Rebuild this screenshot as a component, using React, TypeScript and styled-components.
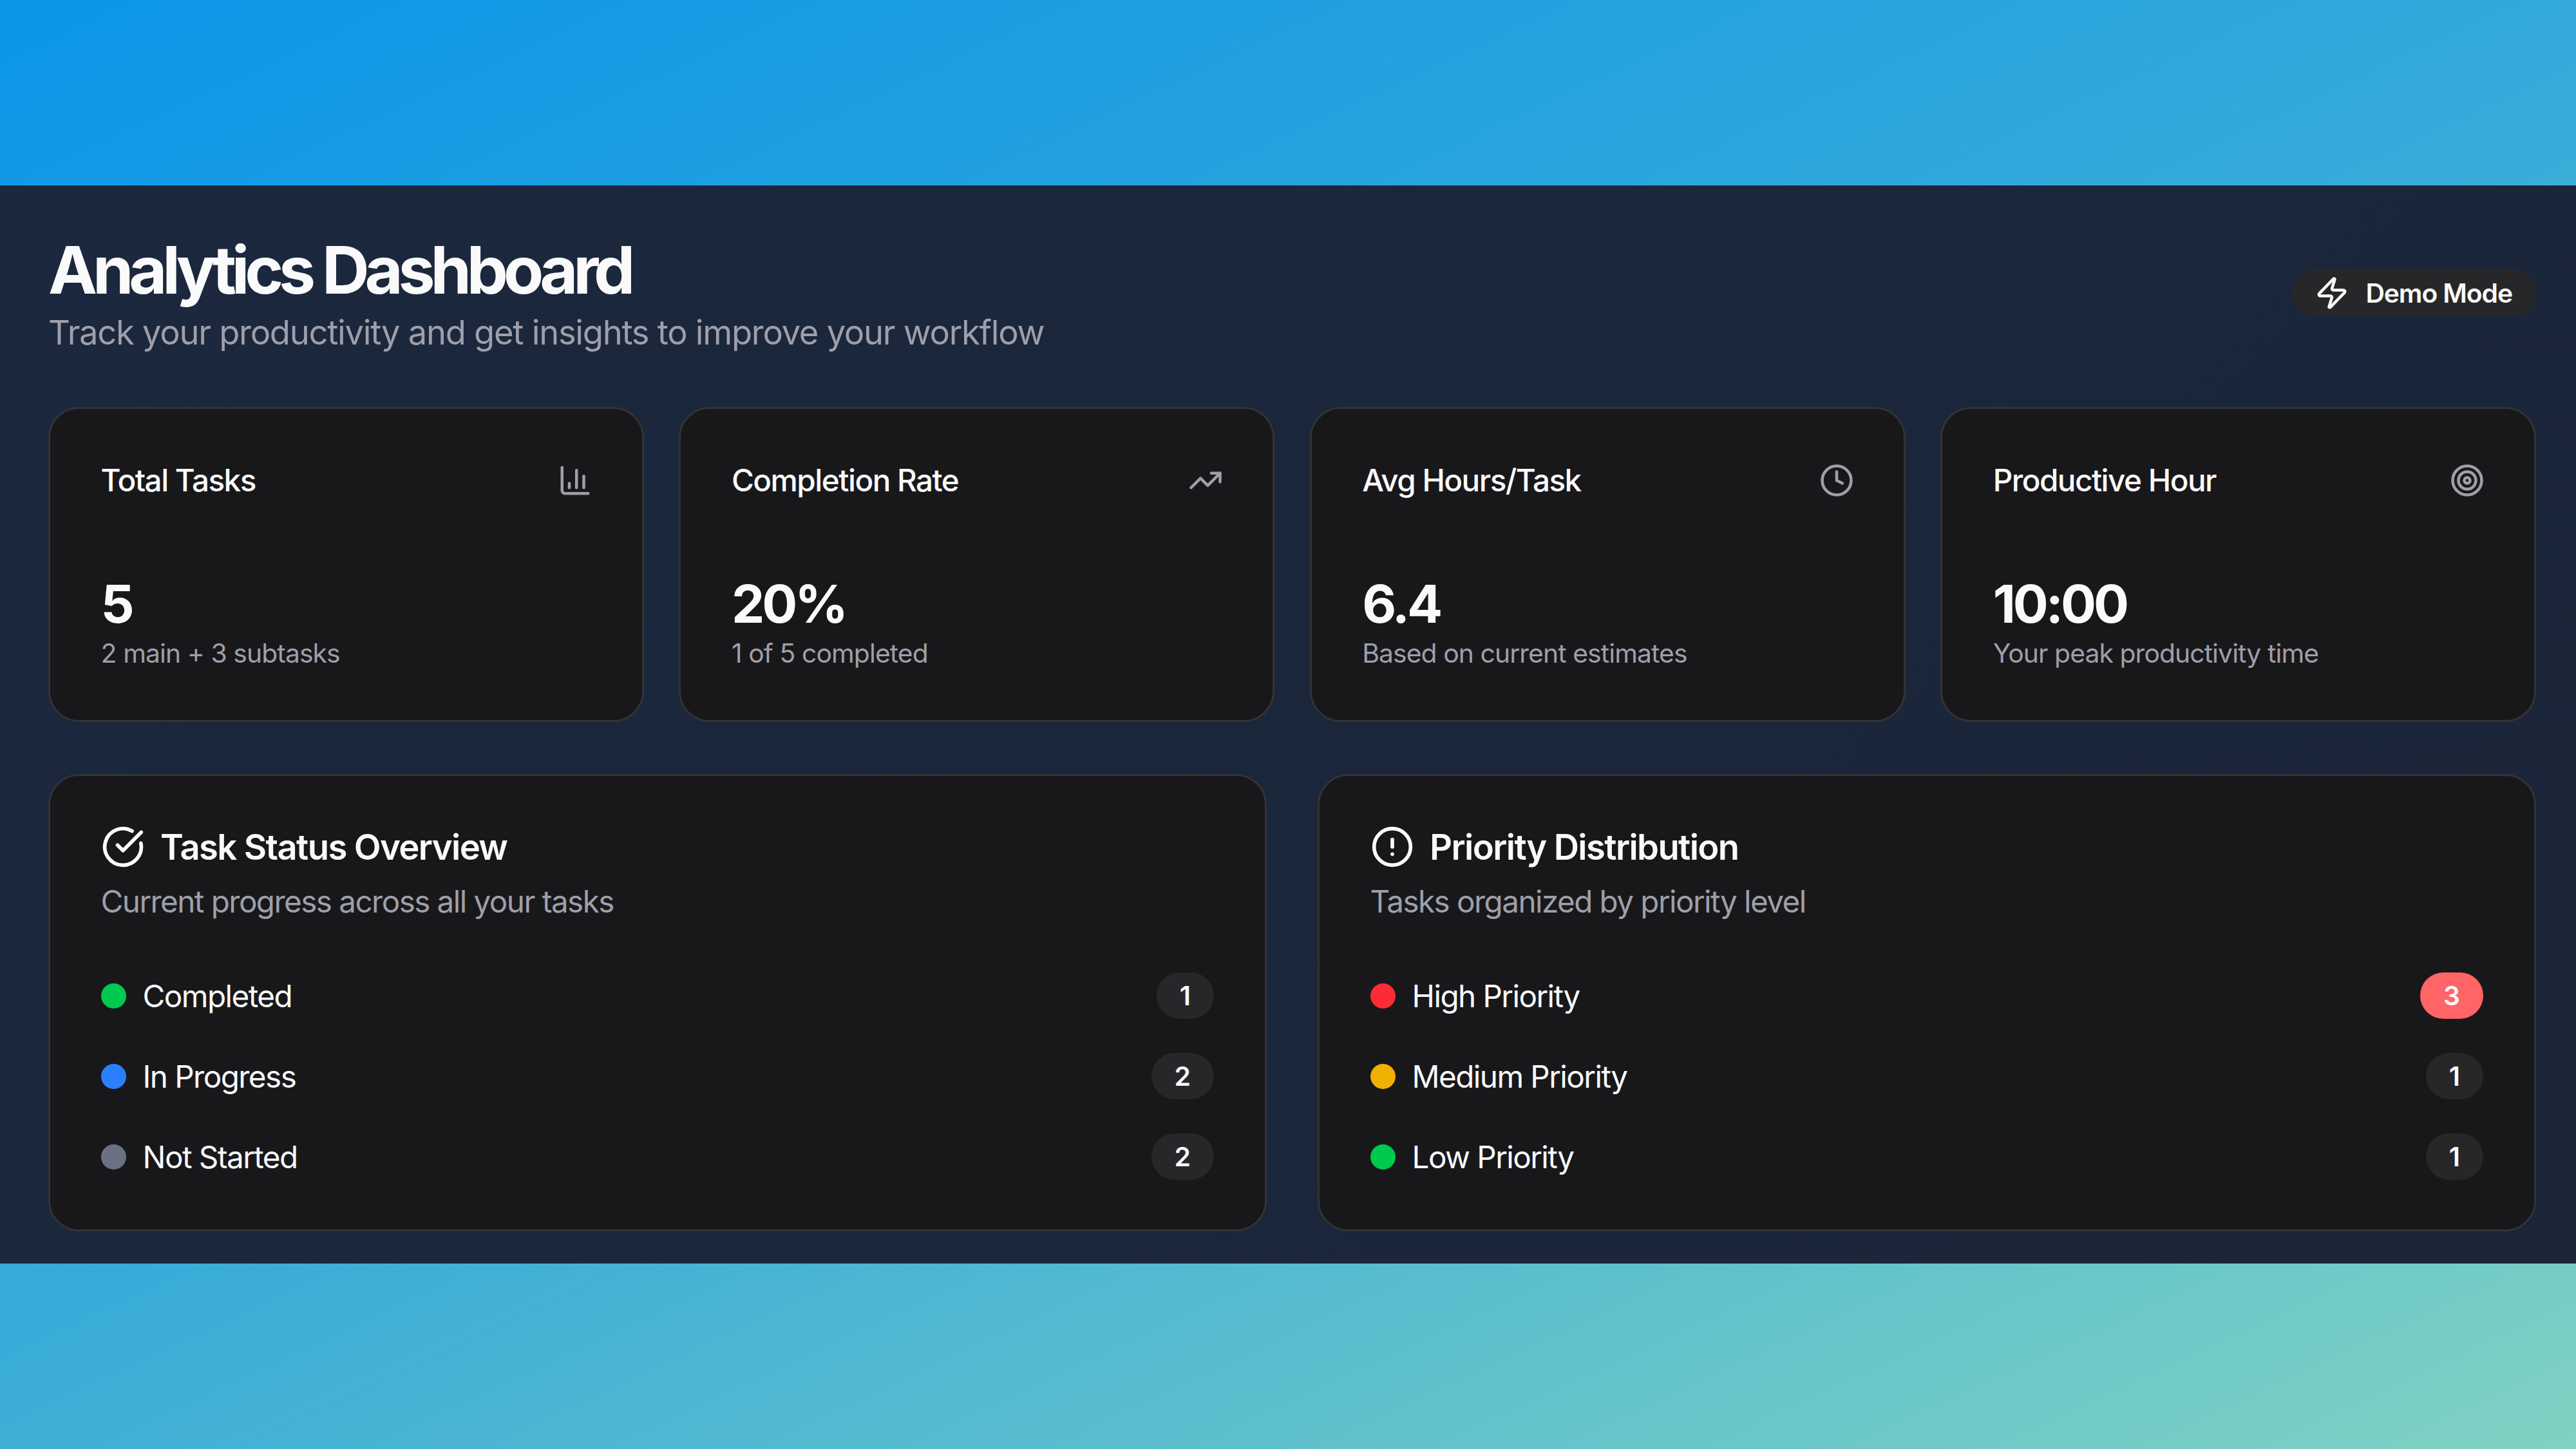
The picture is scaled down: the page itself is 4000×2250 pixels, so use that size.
import React from 'react';
import styled, { createGlobalStyle } from 'styled-components';
import { ChartColumn, TrendingUp, Clock, Target, Zap, CircleCheckBig, CircleAlert } from 'lucide-react';

const Global = createGlobalStyle`
  html, body { margin: 0; padding: 0; }
  body { font-family: Inter, "Noto Sans", sans-serif; -webkit-font-smoothing: antialiased; }
`;

const Page = styled.div`
  width: 4000px;
  height: 2250px;
  padding: 288px 0;
  box-sizing: border-box;
  background: linear-gradient(155deg, #0b96e8 0%, #38abd9 50%, #80d2c2 100%);
`;

const Panel = styled.main`
  height: 1674px;
  box-sizing: border-box;
  padding: 60.5px 62px 0 75px;
  background: linear-gradient(135deg, #1b283d, #1a2538);
  color: #fafafa;
`;

const Header = styled.header`
  display: flex;
  justify-content: space-between;
  align-items: center;
  height: 212px;
`;

const Title = styled.h1`
  margin: 0;
  font-size: 102px;
  line-height: 122px;
  font-weight: 700;
  letter-spacing: -7.2px;
`;

const Subtitle = styled.p`
  margin: 0;
  font-size: 52.5px;
  line-height: 72px;
  letter-spacing: -1.28px;
  color: #9f9fa9;
`;

const DemoPill = styled.div`
  display: flex;
  align-items: center;
  gap: 25px;
  height: 73px;
  box-sizing: border-box;
  padding: 0 37px 0 34px;
  border-radius: 37px;
  background: #27272a;
  font-size: 40.8px;
  font-weight: 600;
  letter-spacing: -1.1px;
`;

const StatGrid = styled.section`
  display: grid;
  grid-template-columns: repeat(4, 1fr);
  gap: 54.4px;
  margin-top: 71.5px;
`;

const Card = styled.article`
  box-sizing: border-box;
  background: #18181b;
  border: 3.4px solid #333336;
  border-radius: 47.6px;
`;

const StatCard = styled(Card)`
  height: 489px;
  padding: 76.6px 77px 0 78.6px;
`;

const StatHead = styled.div`
  display: flex;
  justify-content: space-between;
  align-items: center;
  height: 68px;
  color: #9f9fa9;
`;

const StatLabel = styled.span`
  font-size: 47.6px;
  font-weight: 550;
  letter-spacing: -1.5px;
  color: #fafafa;
`;

const StatValue = styled.div`
  margin-top: 103px;
  font-size: 81.6px;
  line-height: 109px;
  font-weight: 700;
  letter-spacing: -4px;
`;

const StatNote = styled.div`
  margin-top: -4.6px;
  font-size: 40.8px;
  line-height: 54px;
  letter-spacing: -0.9px;
  color: #9f9fa9;
`;

const PanelGrid = styled.section`
  display: grid;
  grid-template-columns: 1fr 1fr;
  gap: 79px;
  margin-top: 81px;
`;

const ListCard = styled(Card)`
  height: 710px;
  padding: 76px 79px 0 78.6px;
`;

const ListTitle = styled.h2`
  margin: 0;
  display: flex;
  align-items: center;
  gap: 24.5px;
  height: 68px;
  font-size: 54.4px;
  font-weight: 600;
  letter-spacing: -1.6px;
`;

const ListNote = styled.p`
  margin: 17px 0 0;
  font-size: 47.6px;
  line-height: 68px;
  letter-spacing: -1.55px;
  color: #9f9fa9;
`;

const Rows = styled.ul`
  list-style: none;
  margin: 76px 0 0;
  padding: 0;
  display: flex;
  flex-direction: column;
  gap: 53px;
`;

const Row = styled.li`
  display: flex;
  justify-content: space-between;
  align-items: center;
  height: 72px;
`;

const RowLabel = styled.div`
  display: flex;
  align-items: center;
  gap: 26px;
  font-size: 47.6px;
  letter-spacing: -1.55px;
`;

const Dot = styled.span<{ $color: string }>`
  width: 39px;
  height: 39px;
  border-radius: 50%;
  background: ${p => p.$color};
`;

const Badge = styled.span<{ $hot?: boolean }>`
  display: flex;
  align-items: center;
  height: 72px;
  box-sizing: border-box;
  padding: 0 36px;
  border-radius: 36px;
  font-size: 40.8px;
  font-weight: 600;
  background: ${p => (p.$hot ? '#ff6467' : '#27272a')};
`;

const stats = [
  { label: 'Total Tasks', value: '5', note: '2 main + 3 subtasks', Icon: ChartColumn },
  { label: 'Completion Rate', value: '20%', note: '1 of 5 completed', Icon: TrendingUp },
  { label: 'Avg Hours/Task', value: '6.4', note: 'Based on current estimates', Icon: Clock },
  { label: 'Productive Hour', value: '10:00', note: 'Your peak productivity time', Icon: Target },
];

const lists = [
  {
    title: 'Task Status Overview',
    note: 'Current progress across all your tasks',
    Icon: CircleCheckBig,
    rows: [
      { label: 'Completed', color: '#00c950', count: 1 },
      { label: 'In Progress', color: '#2b7fff', count: 2 },
      { label: 'Not Started', color: '#6a7282', count: 2 },
    ],
  },
  {
    title: 'Priority Distribution',
    note: 'Tasks organized by priority level',
    Icon: CircleAlert,
    rows: [
      { label: 'High Priority', color: '#fb2c36', count: 3, hot: true },
      { label: 'Medium Priority', color: '#f0b100', count: 1 },
      { label: 'Low Priority', color: '#00c950', count: 1 },
    ],
  },
];

export default function App() {
  return (
    <Page>
      <Global />
      <Panel>
        <Header>
          <div>
            <Title>Analytics Dashboard</Title>
            <Subtitle>Track your productivity and get insights to improve your workflow</Subtitle>
          </div>
          <DemoPill>
            <Zap size={54} />
            Demo Mode
          </DemoPill>
        </Header>
        <StatGrid>
          {stats.map(({ label, value, note, Icon }) => (
            <StatCard key={label}>
              <StatHead>
                <StatLabel>{label}</StatLabel>
                <Icon size={54} />
              </StatHead>
              <StatValue>{value}</StatValue>
              <StatNote>{note}</StatNote>
            </StatCard>
          ))}
        </StatGrid>
        <PanelGrid>
          {lists.map(({ title, note, Icon, rows }) => (
            <ListCard key={title}>
              <ListTitle>
                <Icon size={68} />
                {title}
              </ListTitle>
              <ListNote>{note}</ListNote>
              <Rows>
                {rows.map(r => (
                  <Row key={r.label}>
                    <RowLabel>
                      <Dot $color={r.color} />
                      {r.label}
                    </RowLabel>
                    <Badge $hot={r.hot}>{r.count}</Badge>
                  </Row>
                ))}
              </Rows>
            </ListCard>
          ))}
        </PanelGrid>
      </Panel>
    </Page>
  );
}
